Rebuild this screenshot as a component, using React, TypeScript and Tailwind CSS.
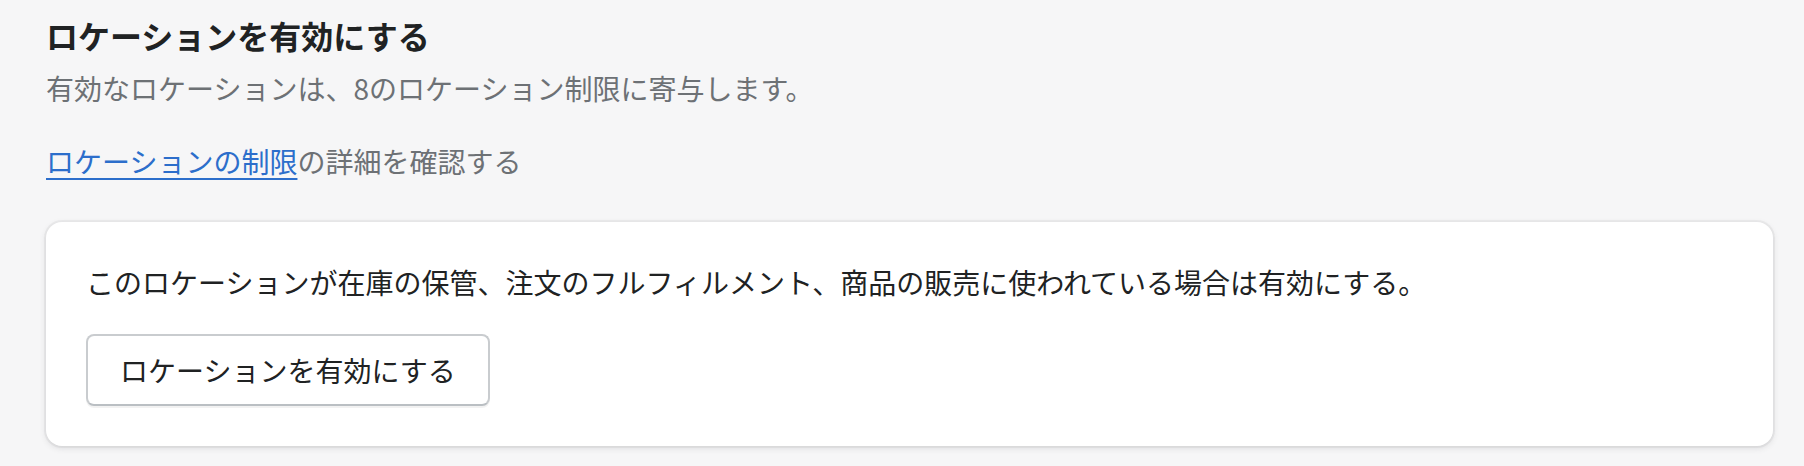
import React from "react";

export default function App() {
  return (
    <div
      className="w-full h-[466px] bg-[#f6f6f7] pl-[46px] pr-[31px] pt-[15px] overflow-hidden"
      style={{ fontFamily: '"Noto Sans CJK JP", "Noto Sans", sans-serif' }}
    >
      <h2 className="text-[32px] leading-[40px] font-semibold text-[#202223]">
        ロケーションを有効にする
      </h2>
      <p className="mt-[13px] text-[28px] leading-[40px] text-[#6d7175]">
        有効なロケーションは、8のロケーション制限に寄与します。
      </p>
      <p className="mt-[33px] text-[28px] leading-[40px] text-[#6d7175]">
        <a className="text-[#2c6ecb] underline decoration-2 underline-offset-[5px]" href="#">
          ロケーションの制限
        </a>
        の詳細を確認する
      </p>
      <div className="mt-[41px] bg-white rounded-[16px] p-[40px] shadow-[0_0_0_2px_rgba(63,63,68,0.05),0_2px_6px_0_rgba(63,63,68,0.15)]">
        <p className="text-[28px] leading-[40px] text-[#202223]">
          このロケーションが在庫の保管、注文のフルフィルメント、商品の販売に使われている場合は有効にする。
        </p>
        <button className="mt-[32px] h-[72px] px-[32px] rounded-[8px] border-2 border-[#c9cccf] border-b-[#babfc3] bg-white text-[28px] leading-[40px] text-[#202223] shadow-[0_2px_0_rgba(0,0,0,0.05)]">
          ロケーションを有効にする
        </button>
      </div>
    </div>
  );
}
